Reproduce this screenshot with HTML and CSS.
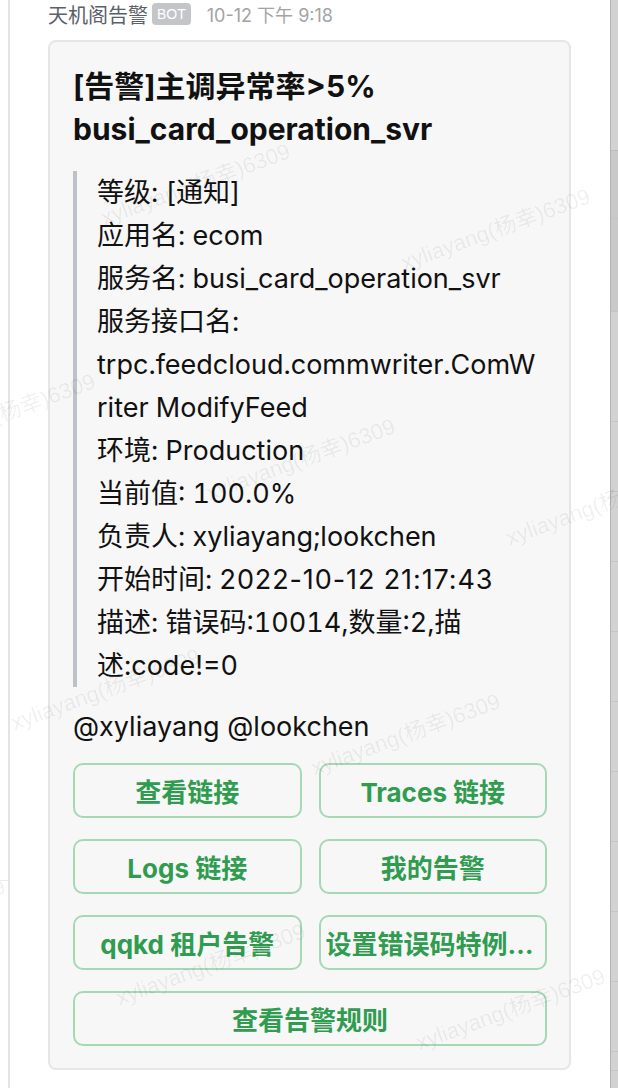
FILE: index.html
```html
<!DOCTYPE html>
<html lang="zh-CN">
<head>
<meta charset="utf-8">
<title>天机阁告警</title>
<link rel="stylesheet" href="styles.css">
</head>
<body>
<div class="screen">
  <div class="rail-left"><div class="rail-left-seg"></div></div>
  <main class="chat">
    <div class="msg">
      <div class="msg-head">
        <span class="sender">天机阁告警</span>
        <span class="badge">BOT</span>
        <span class="time">10-12 下午 9:18</span>
      </div>
      <div class="card">
        <h1 class="title">[告警]主调异常率&gt;5% busi_card_operation_svr</h1>
        <blockquote class="fields">
          <p>等级: [通知]</p>
          <p>应用名: ecom</p>
          <p>服务名: busi_card_operation_svr</p>
          <p>服务接口名:<br>trpc.feedcloud.commwriter.ComW<br>riter ModifyFeed</p>
          <p>环境: Production</p>
          <p>当前值: 100.0%</p>
          <p>负责人: xyliayang;lookchen</p>
          <p>开始时间: <span class="stamp">2022-10-12 21:17:43</span></p>
          <p>描述: 错误码:10014,数量:2,描<br>述:code!=0</p>
        </blockquote>
        <p class="mentions">@xyliayang @lookchen</p>
        <div class="actions">
          <button class="btn">查看链接</button>
          <button class="btn">Traces 链接</button>
          <button class="btn">Logs 链接</button>
          <button class="btn">我的告警</button>
          <button class="btn">qqkd 租户告警</button>
          <button class="btn"><span class="btn-label">设置错误码特例过滤规则</span></button>
          <button class="btn btn-wide">查看告警规则</button>
        </div>
      </div>
    </div>
  </main>
  <div class="rail-right">
    <div class="seg s1"></div>
    <div class="seg s2"></div>
    <div class="seg s3"></div>
    <div class="seg s4"></div>
    <div class="seg s5"></div>
    <div class="seg s5"></div>
    <div class="seg s5"></div>
    <div class="seg s5"></div>
    <div class="seg s5"></div>
    <div class="seg s5"></div>
    <div class="seg s5"></div>
    <div class="seg s5"></div>
    <div class="seg s5"></div>
    <div class="seg s6"></div>
  </div>
  <div class="watermarks" aria-hidden="true">
    <span class="wm w1">xyliayang(杨幸)6309</span>
    <span class="wm w2">xyliayang(杨幸)6309</span>
    <span class="wm w3">xyliayang(杨幸)6309</span>
    <span class="wm w4">xyliayang(杨幸)6309</span>
    <span class="wm w5">xyliayang(杨幸)6309</span>
    <span class="wm w6">xyliayang(杨幸)6309</span>
    <span class="wm w7">xyliayang(杨幸)6309</span>
    <span class="wm w8">xyliayang(杨幸)6309</span>
    <span class="wm w9">xyliayang(杨幸)6309</span>
    <span class="wm w10">xyliayang(杨幸)6309</span>
    <span class="wm w11">xyliayang(杨幸)6309</span>
  </div>
</div>
</body>
</html>
```

FILE: styles.css
```css
* { box-sizing: border-box; }

html, body {
  margin: 0;
  padding: 0;
  background: #ffffff;
}

body {
  font-family: "Inter", "Noto Sans CJK SC", sans-serif;
  color: #111111;
}

.screen {
  position: relative;
  width: 618px;
  height: 1088px;
  display: flex;
  overflow: hidden;
}

.rail-left {
  width: 10px;
  flex: none;
  border-right: 2px solid #e4e4e4;
  display: flex;
  flex-direction: column;
}

.rail-left-seg {
  height: 881px;
  border-bottom: 1px solid #ececec;
}

.chat {
  flex: 1;
  padding-left: 38px;
}

.msg {
  width: 523px;
}

.msg-head {
  display: flex;
  align-items: center;
  height: 28px;
  white-space: nowrap;
}

.sender {
  font-size: 20px;
  color: #5b6068;
}

.badge {
  margin-left: 4px;
  height: 22px;
  padding: 0 5px;
  border-radius: 4px;
  background: #c4c5c8;
  color: #ffffff;
  font-size: 14px;
  line-height: 22px;
  font-family: "Liberation Sans", sans-serif;
}

.time {
  margin-left: 16px;
  font-size: 18px;
  color: #a3a3a3;
}

.card {
  margin-top: 12px;
  border: 2px solid #e6e6e6;
  border-radius: 8px;
  background: #f7f7f7;
  padding: 23px 22px 22px 23px;
}

.title {
  margin: 0;
  font-size: 30px;
  line-height: 43px;
  font-weight: 700;
  color: #111111;
}

.fields {
  margin: 20px 0 0 0;
  padding-left: 20px;
  border-left: 4px solid #bcc1ca;
  font-size: 27px;
  line-height: 43px;
  font-variant-numeric: tabular-nums;
}

.fields p {
  margin: 0;
  white-space: nowrap;
}

.fields p:last-child {
  margin-bottom: -10px;
}

.stamp {
  font-variant-numeric: normal;
  letter-spacing: 0.9px;
}

.mentions {
  margin: 28px 0 0 0;
  font-size: 27px;
  line-height: 43px;
}

.actions {
  margin-top: 15px;
  display: grid;
  grid-template-columns: 1fr 1fr;
  gap: 21px 17px;
}

.btn {
  height: 55px;
  border: 2px solid #a6d8b5;
  border-radius: 10px;
  background: transparent;
  font-family: "Inter", "Noto Sans CJK SC", sans-serif;
  font-size: 26px;
  font-weight: 700;
  color: #2f9c4f;
  padding: 0 5px;
  overflow: hidden;
  white-space: nowrap;
}

.btn-label {
  display: block;
  overflow: hidden;
  text-overflow: ellipsis;
  white-space: nowrap;
}

.btn-wide {
  grid-column: 1 / span 2;
}

.rail-right {
  width: 8px;
  flex: none;
  background: #d2d2d2;
  border-left: 1px solid #b3b3b3;
  display: flex;
  flex-direction: column;
}

.seg { border-bottom: 1px solid #c4c4c4; flex: none; }
.s1 { height: 151px; border-bottom-color: #bbbbbb; }
.s2 { height: 68px; background: #c9c9c9; }
.s3 { height: 93px; background: #c9c9c9; }
.s4 { height: 110px; }
.s5 { height: 70px; }
.s6 { height: 19px; }

.watermarks {
  position: absolute;
  inset: 0;
  pointer-events: none;
}

.wm {
  position: absolute;
  font-family: "Liberation Sans", "Noto Sans CJK SC", sans-serif;
  font-size: 22px;
  line-height: 24px;
  color: rgba(0, 0, 0, 0.065);
  white-space: nowrap;
  transform: rotate(-20deg);
  transform-origin: 0 50%;
}

.w1  { left: -198px; top: 162px; }
.w2  { left: 102px;  top: 207px; }
.w3  { left: 402px;  top: 252px; }
.w4  { left: -93px;  top: 437px; }
.w5  { left: 207px;  top: 482px; }
.w6  { left: 507px;  top: 527px; }
.w7  { left: 12px;   top: 712px; }
.w8  { left: 312px;  top: 757px; }
.w9  { left: -183px; top: 942px; }
.w10 { left: 117px;  top: 987px; }
.w11 { left: 417px;  top: 1032px; }
```
